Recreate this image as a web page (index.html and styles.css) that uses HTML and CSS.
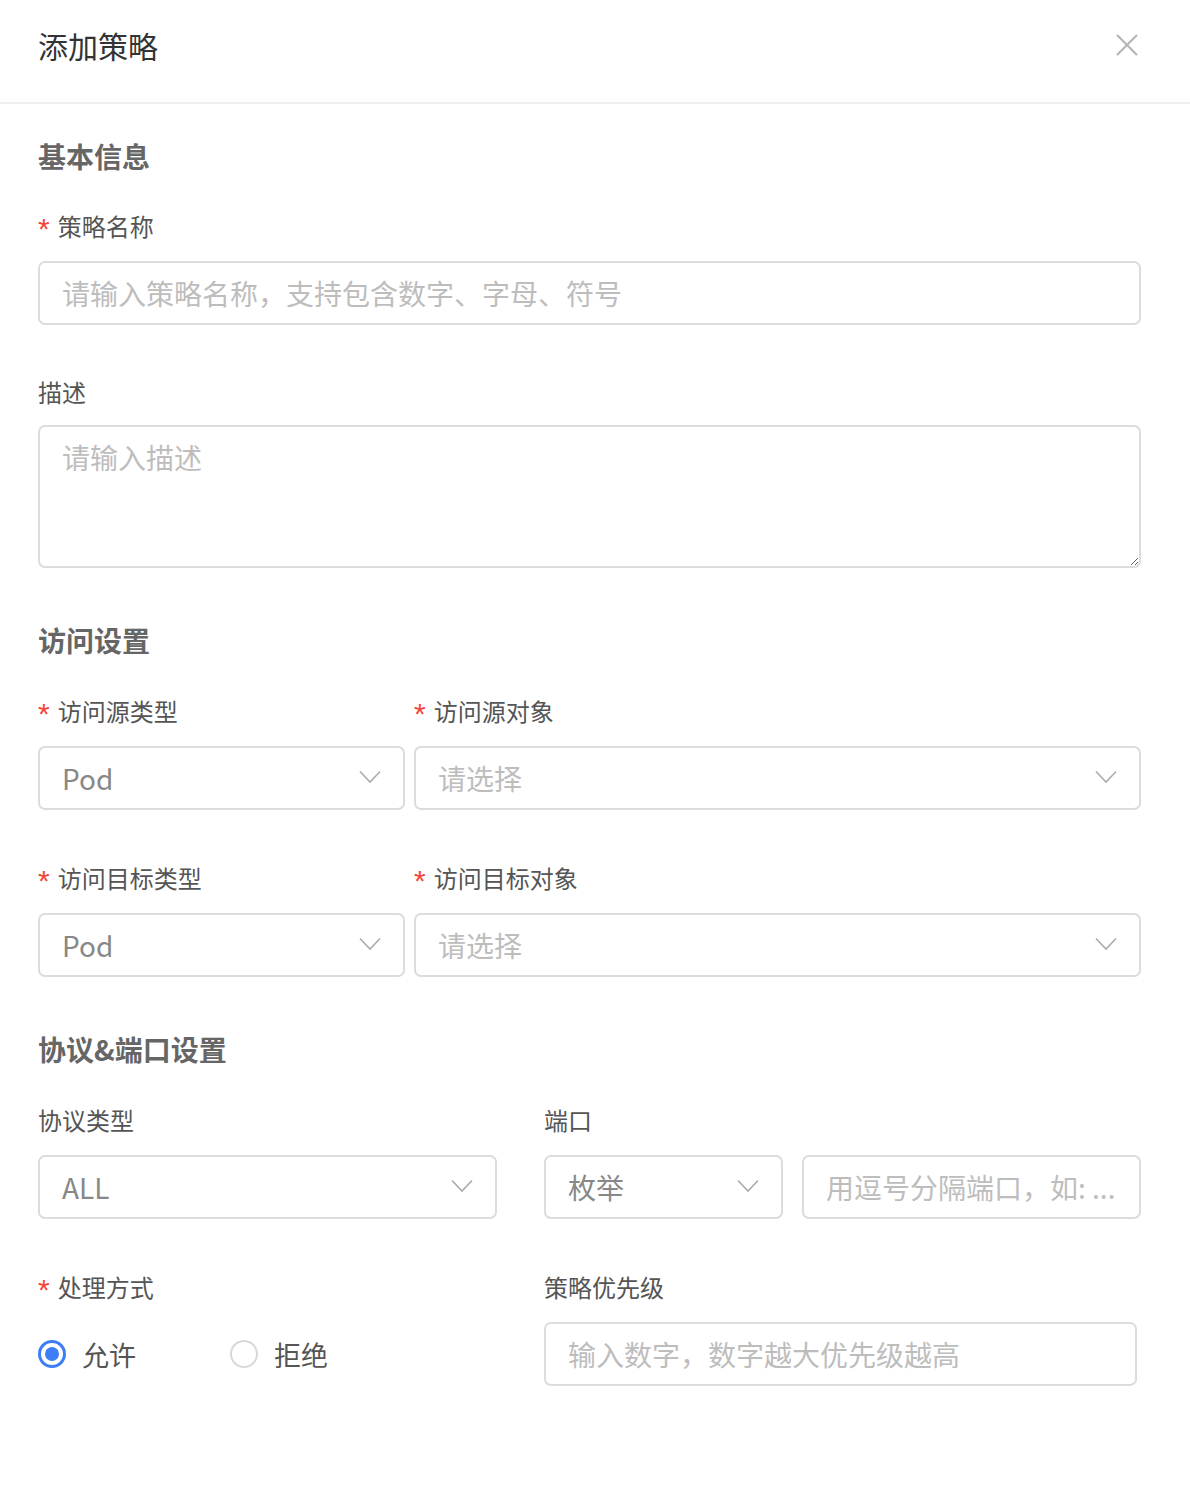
FILE: index.html
```html
<!DOCTYPE html>
<html lang="zh-CN">
<head>
    <meta charset="UTF-8">
    <meta name="viewport" content="width=device-width, initial-scale=1.0">
    <title>添加策略</title>
    <link rel="stylesheet" href="styles.css">
</head>
<body>
    <div class="dialog">
        <header class="dialog-header">
            <h2 class="dialog-title">添加策略</h2>
            <button type="button" class="close-btn" aria-label="关闭">
                <svg width="22" height="22" viewBox="0 0 22 22"><path d="M1 1 L21 21 M21 1 L1 21" stroke="#b3b3b3" stroke-width="2" fill="none"/></svg>
            </button>
        </header>

        <form class="dialog-body">
            <h3 class="section-title">基本信息</h3>
            <div class="form-item name-item">
                <label class="form-label required">策略名称</label>
                <input type="text" class="text-input" placeholder="请输入策略名称，支持包含数字、字母、符号">
            </div>
            <div class="form-item">
                <label class="form-label desc-label">描述</label>
                <textarea class="text-area" placeholder="请输入描述"></textarea>
            </div>

            <h3 class="section-title">访问设置</h3>
            <div class="form-row access-row">
                <div class="form-item">
                    <label class="form-label required">访问源类型</label>
                    <div class="select"><span class="select-value">Pod</span><svg class="chevron" width="22" height="14" viewBox="0 0 22 14"><path d="M1 1.5 L11 12 L21 1.5" fill="none" stroke="#ababab" stroke-width="1.6"/></svg></div>
                </div>
                <div class="form-item">
                    <label class="form-label required">访问源对象</label>
                    <div class="select"><span class="select-placeholder">请选择</span><svg class="chevron" width="22" height="14" viewBox="0 0 22 14"><path d="M1 1.5 L11 12 L21 1.5" fill="none" stroke="#ababab" stroke-width="1.6"/></svg></div>
                </div>
            </div>
            <div class="form-row access-row">
                <div class="form-item">
                    <label class="form-label required">访问目标类型</label>
                    <div class="select"><span class="select-value">Pod</span><svg class="chevron" width="22" height="14" viewBox="0 0 22 14"><path d="M1 1.5 L11 12 L21 1.5" fill="none" stroke="#ababab" stroke-width="1.6"/></svg></div>
                </div>
                <div class="form-item">
                    <label class="form-label required">访问目标对象</label>
                    <div class="select"><span class="select-placeholder">请选择</span><svg class="chevron" width="22" height="14" viewBox="0 0 22 14"><path d="M1 1.5 L11 12 L21 1.5" fill="none" stroke="#ababab" stroke-width="1.6"/></svg></div>
                </div>
            </div>

            <h3 class="section-title">协议&amp;端口设置</h3>
            <div class="form-row half-row">
                <div class="form-item">
                    <label class="form-label">协议类型</label>
                    <div class="select protocol-select"><span class="select-value">ALL</span><svg class="chevron" width="22" height="14" viewBox="0 0 22 14"><path d="M1 1.5 L11 12 L21 1.5" fill="none" stroke="#ababab" stroke-width="1.6"/></svg></div>
                </div>
                <div class="form-item">
                    <label class="form-label">端口</label>
                    <div class="port-group">
                        <div class="select"><span class="select-value">枚举</span><svg class="chevron" width="22" height="14" viewBox="0 0 22 14"><path d="M1 1.5 L11 12 L21 1.5" fill="none" stroke="#ababab" stroke-width="1.6"/></svg></div>
                        <input type="text" class="text-input" placeholder="用逗号分隔端口，如: ...">
                    </div>
                </div>
            </div>
            <div class="form-row half-row">
                <div class="form-item">
                    <label class="form-label required">处理方式</label>
                    <div class="radio-group">
                        <label class="radio checked"><span class="radio-dot"></span>允许</label>
                        <label class="radio"><span class="radio-dot"></span>拒绝</label>
                    </div>
                </div>
                <div class="form-item">
                    <label class="form-label">策略优先级</label>
                    <input type="text" class="text-input priority-input" placeholder="输入数字，数字越大优先级越高">
                </div>
            </div>
        </form>
    </div>
</body>
</html>
```

FILE: styles.css
```css
* {
    box-sizing: border-box;
}
body {
    margin: 0;
    background: #fff;
    font-family: "Noto Sans CJK SC", "Noto Sans", sans-serif;
    color: #555;
}
.dialog-header {
    display: flex;
    align-items: center;
    justify-content: space-between;
    height: 104px;
    padding: 0 52px 12px 38px;
    border-bottom: 2px solid #efefef;
}
.dialog-title {
    margin: 0;
    font-size: 30px;
    font-weight: normal;
    color: #333;
}
.close-btn {
    border: none;
    background: none;
    padding: 0;
    display: flex;
    cursor: pointer;
}
.dialog-body {
    padding: 32px 49px 60px 38px;
}
.section-title {
    margin: 0 0 32px;
    font-size: 28px;
    line-height: 40px;
    font-weight: bold;
    color: #666;
}
.form-item ~ .section-title,
.form-row ~ .section-title {
    padding-top: 2px;
    margin-bottom: 33px;
}
.form-item {
    margin-bottom: 50px;
}
.name-item {
    margin-bottom: 49px;
}
.form-row .form-item {
    margin-bottom: 0;
}
.form-row {
    display: grid;
    margin-bottom: 50px;
}
.access-row {
    grid-template-columns: 367px 1fr;
    column-gap: 9px;
}
.half-row {
    grid-template-columns: 506px 1fr;
}
.form-label {
    display: block;
    height: 36px;
    font-size: 24px;
    line-height: 36px;
    margin-bottom: 17px;
    color: #555;
}
.desc-label {
    margin-bottom: 15px;
}
.required::before {
    content: "*";
    display: inline-block;
    vertical-align: top;
    height: 36px;
    color: #f5443b;
    margin-right: 8px;
    font-family: "Liberation Sans", sans-serif;
    font-size: 30px;
    line-height: 42px;
}
.text-input, .select, .text-area {
    display: block;
    width: 100%;
    height: 64px;
    border: 2px solid #dcdcdc;
    border-radius: 7px;
    padding: 0 22px;
    font-family: inherit;
    font-size: 28px;
    color: #888;
    background: #fff;
    outline: none;
}
::placeholder {
    color: #bdbdbd;
}
.text-area {
    height: 143px;
    padding-top: 10px;
    line-height: 40px;
}
.select {
    display: flex;
    align-items: center;
    justify-content: space-between;
    padding-right: 22px;
}
.select-value {
    color: #888;
}
.select-placeholder {
    color: #bdbdbd;
}
.chevron {
    flex: none;
    margin-top: -2px;
}
.protocol-select {
    width: 459px;
}
.port-group {
    display: grid;
    grid-template-columns: 239px 1fr;
    column-gap: 19px;
}
.priority-input {
    width: 593px;
}
.radio-group {
    display: flex;
    height: 64px;
    align-items: center;
}
.radio {
    display: flex;
    align-items: center;
    width: 192px;
    font-size: 27px;
    color: #555;
}
.radio-dot {
    width: 28px;
    height: 28px;
    border: 2px solid #d9d9d9;
    border-radius: 50%;
    margin-right: 16px;
    position: relative;
}
.radio.checked .radio-dot {
    border: 3px solid #3d7ef6;
}
.radio.checked .radio-dot::after {
    content: "";
    position: absolute;
    left: 4px;
    top: 4px;
    width: 14px;
    height: 14px;
    border-radius: 50%;
    background: #3d7ef6;
}
```
